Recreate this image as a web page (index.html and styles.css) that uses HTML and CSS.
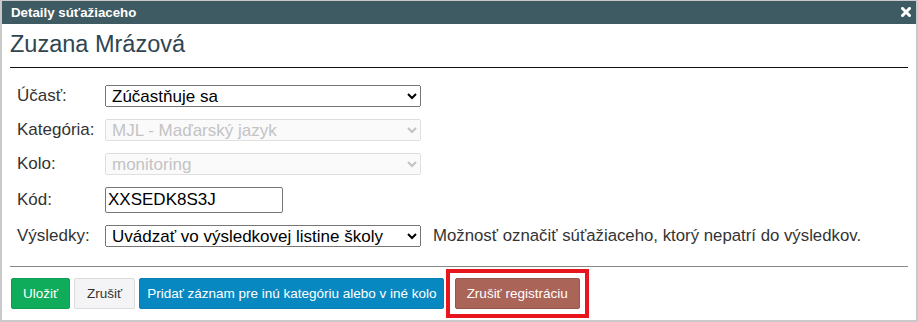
FILE: index.html
```html
<!DOCTYPE html>
<html lang="sk">
<head>
    <meta charset="UTF-8">
    <title>Detaily súťažiaceho</title>
    <link rel="stylesheet" href="styles.css">
</head>
<body>
    <div class="dialog">
        <!-- Title bar -->
        <div class="titlebar">
            <span class="title">Detaily súťažiaceho</span>
            <span class="close">
                <svg width="10" height="10" viewBox="0 0 10 10">
                    <path d="M1.5 1.5 L8.5 8.5 M8.5 1.5 L1.5 8.5" stroke="#fff" stroke-width="3" stroke-linecap="square"/>
                </svg>
            </span>
        </div>

        <div class="content">
            <h1 class="name">Zuzana Mrázová</h1>

            <div class="form">
                <div class="row">
                    <label>Účasť:</label>
                    <select class="wide">
                        <option>Zúčastňuje sa</option>
                    </select>
                </div>
                <div class="row">
                    <label>Kategória:</label>
                    <select class="wide" disabled>
                        <option>MJL - Maďarský jazyk</option>
                    </select>
                </div>
                <div class="row">
                    <label>Kolo:</label>
                    <select class="wide" disabled>
                        <option>monitoring</option>
                    </select>
                </div>
                <div class="row">
                    <label>Kód:</label>
                    <input class="code" type="text" value="XXSEDK8S3J">
                </div>
                <div class="row">
                    <label>Výsledky:</label>
                    <select class="wide">
                        <option>Uvádzať vo výsledkovej listine školy</option>
                    </select>
                    <span class="help">Možnosť označiť súťažiaceho, ktorý nepatrí do výsledkov.</span>
                </div>
            </div>

            <div class="footer">
                <button class="btn btn-save">Uložiť</button>
                <button class="btn btn-cancel">Zrušiť</button>
                <button class="btn btn-add">Pridať záznam pre inú kategóriu alebo v iné kolo</button>
                <!-- highlighted action -->
                <span class="highlight">
                    <button class="btn btn-unregister">Zrušiť registráciu</button>
                </span>
            </div>
        </div>
    </div>
</body>
</html>
```

FILE: styles.css
```css
/* Global */
body {
    margin: 0;
    font-family: 'Liberation Sans', Arial, sans-serif;
    color: #333;
    background: #fff;
}

.dialog {
    width: 918px;
    height: 322px;
    box-sizing: border-box;
    border: 2px solid #c9c9c9;
    border-top-width: 1px;
    background: #fff;
    overflow: hidden;
}

/* Title bar */
.titlebar {
    height: 23px;
    background: #3e5b63;
    display: flex;
    align-items: center;
    justify-content: space-between;
    padding: 0 5px 0 9px;
}

.title {
    color: #fff;
    font-weight: bold;
    font-size: 13.3px;
}

.close {
    display: flex;
    margin-top: -2px;
}

/* Content */
.content {
    padding: 0 8px;
}

.name {
    margin: 7px 0 0;
    padding-bottom: 9px;
    border-bottom: 1px solid #111;
    font-size: 23.5px;
    font-weight: normal;
    line-height: 27px;
    color: #2f4552;
}

.form {
    display: flex;
    flex-direction: column;
    gap: 12px;
    padding: 17px 0 0 7px;
}

.row {
    display: flex;
    align-items: center;
}

.row label {
    width: 88px;
    font-size: 17px;
    color: #333;
}

select {
    font-family: 'Liberation Sans', Arial, sans-serif;
    font-size: 17px;
    height: 22px;
    padding: 0 0 0 2px;
    color: #000;
}

select:disabled {
    color: #aaa;
}

.wide {
    width: 316px;
}

.code {
    width: 178px;
    height: 26px;
    box-sizing: border-box;
    font-family: 'Liberation Sans', Arial, sans-serif;
    font-size: 17px;
    padding: 1px 2px;
    border: 1px solid #767676;
    border-radius: 2px;
}

.help {
    margin-left: 12px;
    font-size: 16.8px;
    color: #333;
}

/* Footer */
.footer {
    margin-top: 19px;
    border-top: 1px solid #888;
    padding-top: 11px;
    display: flex;
    align-items: flex-start;
    gap: 4px;
}

.btn {
    height: 31px;
    font-family: 'Liberation Sans', Arial, sans-serif;
    font-size: 13.5px;
    border: 1px solid transparent;
    border-radius: 2px;
    color: #fff;
    padding: 0 10px;
}

.btn-save {
    margin-left: 1px;
    padding: 0 11px;
    background: #0fac5c;
    border-color: #0c9e53;
}

.btn-cancel {
    padding: 0 12px;
    background: #f4f4f6;
    border-color: #dcdcdc;
    color: #333;
}

.btn-add {
    padding: 0 6px 0 7px;
    background: #0888c1;
    border-color: #0a7eb2;
}

.highlight {
    display: flex;
    margin: -9px 0 -9px -2px;
    padding: 5px;
    border: 4px solid #e8141e;
}

.btn-unregister {
    padding: 0 11px;
    background: #ab6458;
    border-color: #97554b;
}
```
